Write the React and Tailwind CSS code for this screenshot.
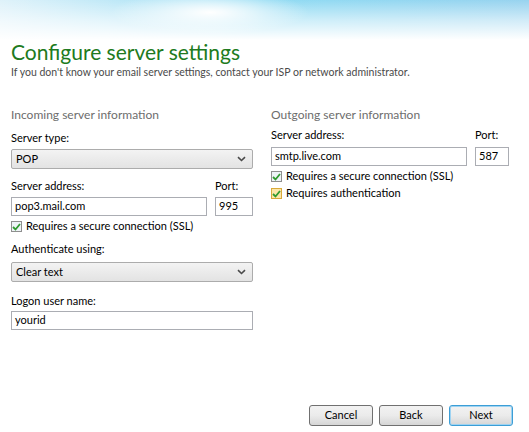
import React from "react";

const font = { fontFamily: 'Lato, "Noto Sans", sans-serif' };

const Chevron = () => (
  <svg width="9" height="6" viewBox="0 0 9 6" className="text-[#4a4a4a]">
    <path d="M1 1.2 L4.5 4.5 L8 1.2" fill="none" stroke="currentColor" strokeWidth="1.6" />
  </svg>
);

const Select = ({ value }) => (
  <div className="h-[20px] w-full flex items-center justify-between px-[4px] border border-[#acacac] rounded-[2px] bg-gradient-to-b from-[#f3f3f3] to-[#e3e3e3] text-[11px] text-black">
    <span>{value}</span>
    <span className="pr-[2px]">
      <Chevron />
    </span>
  </div>
);

const Input = ({ value, className = "" }) => (
  <div className={`h-[19px] flex items-center px-[3px] border border-[#abadb3] bg-white text-[11px] text-black ${className}`}>
    {value}
  </div>
);

const Check = ({ label, yellow, className = "" }) => (
  <div className={`h-[15px] flex items-center gap-[4px] text-[11px] text-black ${className}`}>
    <span
      className={`w-[11px] h-[11px] flex items-center justify-center border ${
        yellow ? "border-[#d8a93a] bg-[#fbe6a8]" : "border-[#8f8f8f] bg-[#eef3f7]"
      }`}
    >
      <svg width="9" height="8" viewBox="0 0 9 8">
        <path d="M1 4 L3.5 6.5 L8 1" fill="none" stroke="#2f9a2f" strokeWidth="1.8" />
      </svg>
    </span>
    {label}
  </div>
);

const Label = ({ children, className = "" }) => (
  <div className={`text-[11px] leading-[15px] text-black ${className}`}>{children}</div>
);

const Button = ({ children, focused }) => (
  <button
    className={`w-[64px] h-[21px] rounded-[3px] border text-[11px] text-black bg-gradient-to-b from-[#f2f2f2] via-[#ebebeb] to-[#d6d6d6] ${
      focused ? "border-[#3c9ed6] shadow-[inset_0_0_0_1px_#9ed3f2]" : "border-[#707070]"
    }`}
  >
    {children}
  </button>
);

export default function App() {
  return (
    <div className="w-[529px] h-[432px] bg-white relative overflow-hidden flex flex-col" style={font}>
      <div className="absolute top-0 left-0 w-full h-[40px] bg-gradient-to-r from-[#dff2fa] via-[#90dbf3] to-[#98d3ef]" />
      <div className="absolute top-0 left-0 w-full h-[40px] bg-gradient-to-b from-transparent via-[rgba(255,255,255,0.55)] to-white" />
      <div className="absolute top-[-10px] left-[110px] w-[200px] h-[45px] bg-[radial-gradient(ellipse_at_center,_#ffffff_0%,_rgba(255,255,255,0)_70%)]" />

      <div className="relative px-[11px] pt-[38px]">
        <h1 className="text-[21px] leading-[28px] text-[#207a20]">Configure server settings</h1>
        <p className="text-[10.5px] leading-[13px] text-[#4a4a4a]">
          If you don't know your email server settings, contact your ISP or network administrator.
        </p>
      </div>

      <div className="relative flex gap-[18px] px-[11px] pt-[28px]">
        <div className="w-[242px] flex flex-col">
          <div className="text-[12px] leading-[16px] text-[#6d6d6d]">Incoming server information</div>
          <Label className="mt-[7px] mb-[4px]">Server type:</Label>
          <Select value="POP" />
          <div className="flex gap-[8px] mt-[9px]">
            <div className="flex-1 flex flex-col">
              <Label className="mb-[4px]">Server address:</Label>
              <Input value="pop3.mail.com" />
            </div>
            <div className="w-[38px] flex flex-col">
              <Label className="mb-[4px]">Port:</Label>
              <Input value="995" />
            </div>
          </div>
          <Check className="mt-[3px]" label="Requires a secure connection (SSL)" />
          <Label className="mt-[7px] mb-[6px]">Authenticate using:</Label>
          <Select value="Clear text" />
          <Label className="mt-[11px] mb-[3px]">Logon user name:</Label>
          <Input value="yourid" />
        </div>

        <div className="w-[238px] flex flex-col">
          <div className="text-[12px] leading-[16px] text-[#6d6d6d]">Outgoing server information</div>
          <div className="flex gap-[8px] mt-[4px]">
            <div className="flex-1 flex flex-col">
              <Label className="mb-[5px]">Server address:</Label>
              <Input value="smtp.live.com" />
            </div>
            <div className="w-[34px] flex flex-col">
              <Label className="mb-[5px]">Port:</Label>
              <Input value="587" />
            </div>
          </div>
          <Check className="mt-[3px]" label="Requires a secure connection (SSL)" />
          <Check className="mt-[2px]" label="Requires authentication" yellow />
        </div>
      </div>

      <div className="relative mt-auto flex justify-end gap-[6px] pr-[16px] pb-[6px]">
        <Button>Cancel</Button>
        <Button>Back</Button>
        <Button focused>Next</Button>
      </div>
    </div>
  );
}
